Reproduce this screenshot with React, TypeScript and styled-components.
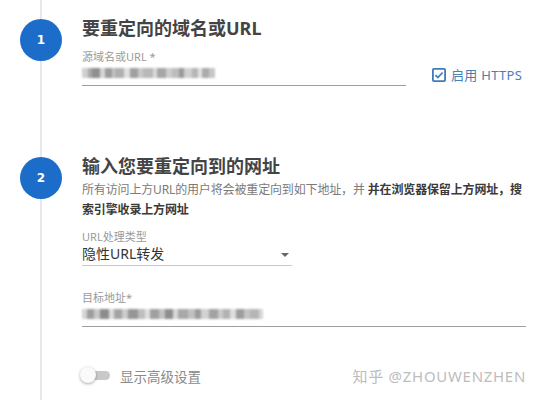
import React from "react";
import styled, { createGlobalStyle } from "styled-components";

const GlobalStyle = createGlobalStyle`
  html, body {
    margin: 0;
    padding: 0;
    background: #ffffff;
  }
  body {
    font-family: "Noto Sans", "Noto Sans CJK SC", sans-serif;
  }
`;

// mosaic of the blurred values in the screenshot
const mosaicA: [number, string][] = [
  [6, "#cfcfcf"], [4, "#a9a9a9"], [8, "#8f8f8f"], [5, "#d6d6d6"], [7, "#9c9c9c"],
  [3, "#c4c4c4"], [9, "#b0b0b0"], [6, "#e0e0e0"], [8, "#a0a0a0"], [5, "#c9c9c9"],
  [10, "#b8b8b8"], [4, "#dadada"], [9, "#a6a6a6"], [6, "#cdcdcd"], [7, "#bdbdbd"],
  [5, "#9a9a9a"], [8, "#d0d0d0"], [6, "#b5b5b5"], [4, "#e2e2e2"], [7, "#ababab"],
  [6, "#c6c6c6"],
];

const mosaicB: [number, string][] = [
  [5, "#d4d4d4"], [7, "#9e9e9e"], [6, "#c8c8c8"], [9, "#8c8c8c"], [5, "#dcdcdc"],
  [8, "#a4a4a4"], [6, "#cccccc"], [10, "#969696"], [7, "#bebebe"], [5, "#e0e0e0"],
  [9, "#a0a0a0"], [6, "#c2c2c2"], [8, "#8e8e8e"], [5, "#d8d8d8"], [10, "#a8a8a8"],
  [7, "#c0c0c0"], [6, "#9b9b9b"], [8, "#d2d2d2"], [9, "#a2a2a2"], [5, "#cacaca"],
  [7, "#b2b2b2"], [6, "#dedede"], [8, "#9d9d9d"], [6, "#c4c4c4"], [9, "#b6b6b6"],
  [4, "#d6d6d6"],
];

const Mosaic = ({ cells }: { cells: [number, string][] }) => (
  <MosaicRow>
    {cells.map(([w, c], i) => (
      <MosaicCell key={i} style={{ width: w, background: c }} />
    ))}
  </MosaicRow>
);

export default function App() {
  return (
    <>
      <GlobalStyle />
      <Page>
        <Step>
          <Rail>
            <Badge>1</Badge>
          </Rail>
          <Body>
            <Title>要重定向的域名或URL</Title>
            <FieldRow>
              <Field $width={326}>
                <Label>源域名或URL *</Label>
                <Value>
                  <Mosaic cells={mosaicA} />
                </Value>
              </Field>
              <Check>
                <CheckBox>
                  <svg width="14" height="14" viewBox="0 0 14 14">
                    <rect x="0.9" y="0.9" width="12.2" height="12.2" rx="1" fill="none" stroke="#3f7bb8" strokeWidth="1.8" />
                    <path d="M3.4 7.1 L5.9 9.6 L10.6 4.5" fill="none" stroke="#3f7bb8" strokeWidth="1.7" />
                  </svg>
                </CheckBox>
                启用 HTTPS
              </Check>
            </FieldRow>
          </Body>
        </Step>

        <Step $top={68}>
          <Rail>
            <Badge>2</Badge>
          </Rail>
          <Body>
            <Title>输入您要重定向到的网址</Title>
            <Desc>
              所有访问上方URL的用户将会被重定向到如下地址，并 <b>并在浏览器保留上方网址，搜索引擎收录上方网址</b>
            </Desc>
            <Field $width={212} $top={10}>
              <Label>URL处理类型</Label>
              <Select>
                隐性URL转发
                <Caret />
              </Select>
            </Field>
            <Field $width={446} $top={25}>
              <Label>目标地址*</Label>
              <Value>
                <Mosaic cells={mosaicB} />
              </Value>
            </Field>
            <ToggleRow>
              <Toggle>
                <Knob />
              </Toggle>
              <ToggleText>显示高级设置</ToggleText>
              <Watermark>知乎 @ZHOUWENZHEN</Watermark>
            </ToggleRow>
          </Body>
        </Step>
      </Page>
    </>
  );
}

const Page = styled.div`
  width: 537px;
  height: 400px;
  padding-top: 16px;
  box-sizing: border-box;
  overflow: hidden;
  background: linear-gradient(#e8e8e8, #e8e8e8) no-repeat 40px 0 / 2px 100%;
`;

const Step = styled.section<{ $top?: number }>`
  display: grid;
  grid-template-columns: 82px 1fr;
  margin-top: ${(p) => p.$top ?? 0}px;
`;

const Rail = styled.div`
  display: flex;
  justify-content: center;
  align-items: flex-start;
`;

const Badge = styled.div`
  margin-top: 3px;
  width: 42px;
  height: 42px;
  border-radius: 50%;
  background: #1b6dc9;
  color: #fff;
  font-family: "DejaVu Sans", sans-serif;
  font-size: 12px;
  font-weight: bold;
  display: flex;
  align-items: center;
  justify-content: center;
`;

const Body = styled.div`
  display: flex;
  flex-direction: column;
  align-items: flex-start;
  padding-right: 8px;
`;

const Title = styled.h2`
  margin: 0;
  font-size: 18px;
  line-height: 24px;
  font-weight: 700;
  color: #444;
`;

const FieldRow = styled.div`
  display: flex;
  align-items: flex-end;
  gap: 26px;
`;

const Field = styled.div<{ $width: number; $top?: number }>`
  width: ${(p) => p.$width}px;
  margin-left: -2px;
  padding-left: 2px;
  box-sizing: border-box;
  margin-top: ${(p) => p.$top ?? 10}px;
`;

const Label = styled.div`
  font-size: 11px;
  line-height: 14px;
  color: #9a9a9a;
`;

const Value = styled.div`
  height: 16px;
  margin-top: 1px;
  padding-bottom: 4px;
  border-bottom: 1px solid #9e9e9e;
  display: flex;
  align-items: center;
`;

const MosaicRow = styled.div`
  display: flex;
  height: 10px;
  filter: blur(0.8px);
`;

const MosaicCell = styled.span`
  display: block;
  height: 100%;
`;

const Check = styled.label`
  display: flex;
  align-items: center;
  gap: 5px;
  margin-bottom: 2px;
  font-size: 13px;
  color: #4a7fb4;
  letter-spacing: 0.3px;
`;

const CheckBox = styled.span`
  display: flex;
  width: 14px;
  height: 14px;
`;

const Desc = styled.p`
  margin: 2px 0 0;
  font-size: 12px;
  line-height: 20px;
  color: #7a7a7a;
  letter-spacing: -0.15px;
  b {
    color: #3a3a3a;
    font-weight: 700;
  }
`;

const Select = styled.div`
  position: relative;
  font-size: 14px;
  line-height: 20px;
  color: #333;
  padding-bottom: 1px;
  border-bottom: 1px solid #c8c8c8;
`;

const Caret = styled.span`
  position: absolute;
  right: 3px;
  top: 9px;
  width: 0;
  height: 0;
  border-left: 4px solid transparent;
  border-right: 4px solid transparent;
  border-top: 4px solid #666;
`;

const ToggleRow = styled.div`
  display: flex;
  align-items: center;
  width: 100%;
  margin-top: 38px;
`;

const Toggle = styled.div`
  position: relative;
  width: 24px;
  height: 9px;
  margin-left: 4px;
  border-radius: 5px;
  background: #c9c9c9;
`;

const Knob = styled.span`
  position: absolute;
  left: -6px;
  top: -4px;
  width: 16px;
  height: 16px;
  border-radius: 50%;
  background: #fafafa;
  box-shadow: 0 1px 3px rgba(0, 0, 0, 0.35);
`;

const ToggleText = styled.span`
  margin-left: 10px;
  font-size: 13.5px;
  color: #8a8a8a;
`;

const Watermark = styled.span`
  margin-left: auto;
  margin-right: 3px;
  font-size: 15px;
  color: #bdbdbd;
  letter-spacing: 0.7px;
`;
